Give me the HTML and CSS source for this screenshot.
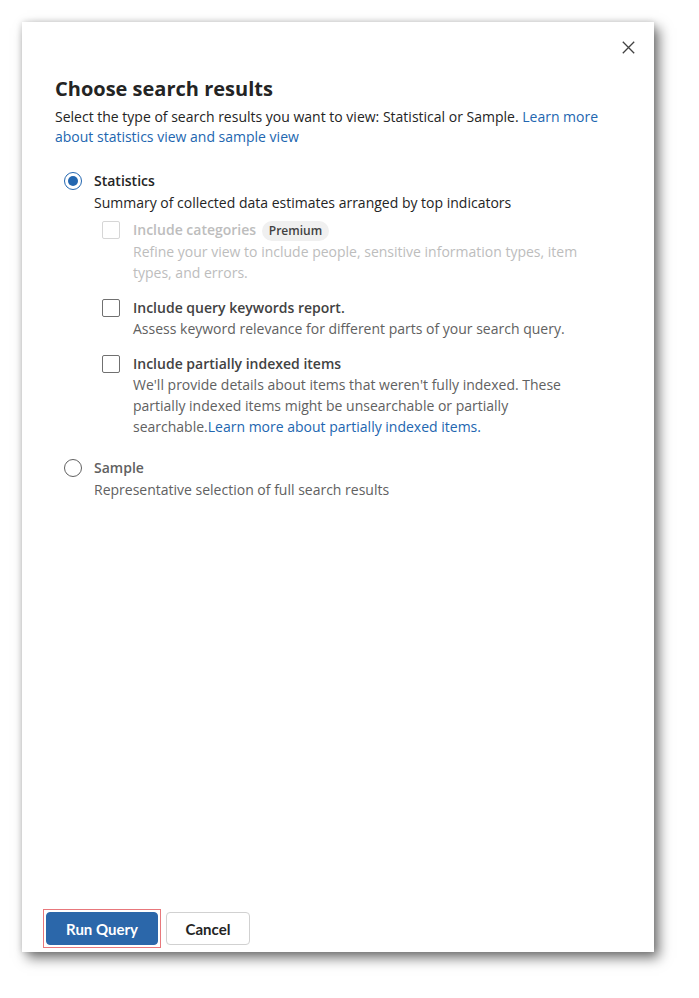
FILE: index.html
```html
<!DOCTYPE html>
<html>
<head>
<meta charset="utf-8">
<link rel="stylesheet" href="styles.css">
</head>
<body>
<div class="panel">
  <button class="close" aria-label="Close">
    <svg width="13" height="13" viewBox="0 0 13 13"><path d="M0.8 0.8L12.2 12.2M12.2 0.8L0.8 12.2" stroke="#424242" stroke-width="1.3" fill="none"/></svg>
  </button>
  <div class="content">
    <h1 class="title">Choose search results</h1>
    <p class="intro">Select the type of search results you want to view: Statistical or Sample. <a class="link" href="#">Learn more about statistics view and sample view</a></p>

    <div class="option">
      <span class="radio checked"></span>
      <div class="opt-body">
        <div class="opt-label strong">Statistics</div>
        <div class="opt-desc strong">Summary of collected data estimates arranged by top indicators</div>

        <div class="check disabled">
          <span class="box"></span>
          <div class="check-body">
            <div class="check-label">Include categories <span class="badge">Premium</span></div>
            <div class="check-desc">Refine your view to include people, sensitive information types, item types, and errors.</div>
          </div>
        </div>

        <div class="check">
          <span class="box"></span>
          <div class="check-body">
            <div class="check-label">Include query keywords report.</div>
            <div class="check-desc">Assess keyword relevance for different parts of your search query.</div>
          </div>
        </div>

        <div class="check">
          <span class="box"></span>
          <div class="check-body">
            <div class="check-label">Include partially indexed items</div>
            <div class="check-desc">We'll provide details about items that weren't fully indexed. These partially indexed items might be unsearchable or partially searchable.<a class="link" href="#">Learn more about partially indexed items.</a></div>
          </div>
        </div>
      </div>
    </div>

    <div class="option sample">
      <span class="radio"></span>
      <div class="opt-body">
        <div class="opt-label">Sample</div>
        <div class="opt-desc">Representative selection of full search results</div>
      </div>
    </div>
  </div>
  <div class="footer">
    <div class="focus-ring"><button class="btn primary">Run Query</button></div>
    <button class="btn secondary">Cancel</button>
  </div>
</div>
</body>
</html>
```
FILE: styles.css
```css
html, body {
  margin: 0;
  padding: 0;
  background: #ffffff;
}
body {
  font-family: "Open Sans", "Noto Sans", sans-serif;
  color: #242424;
  width: 699px;
  height: 998px;
  overflow: hidden;
}
.panel {
  position: relative;
  margin: 22px 0 0 22px;
  width: 632px;
  height: 930px;
  background: #ffffff;
  box-shadow: 5px 6px 12px rgba(0, 0, 0, 0.55), 0 0 6px rgba(0, 0, 0, 0.15);
  display: flex;
  flex-direction: column;
}
.close {
  position: absolute;
  top: 14px;
  right: 15px;
  width: 22px;
  height: 22px;
  padding: 0;
  border: none;
  background: transparent;
  display: flex;
  align-items: center;
  justify-content: center;
}
.content {
  flex: 1;
  padding: 53px 40px 0 33px;
}
.title {
  margin: 0;
  font-size: 20px;
  line-height: 28px;
  font-weight: 700;
  color: #242424;
}
.intro {
  margin: 4px 0 0 0;
  font-size: 14px;
  line-height: 20px;
  color: #242424;
}
.link {
  color: #2266b0;
  text-decoration: none;
}
.option {
  display: flex;
  margin: 24px 0 0 9px;
}
.option.sample {
  margin-top: 21px;
}
.radio {
  flex: none;
  width: 18px;
  height: 18px;
  border: 1px solid #616161;
  border-radius: 50%;
  margin: 1px 12px 0 0;
  box-sizing: border-box;
  position: relative;
}
.radio.checked {
  border-color: #2266b0;
}
.radio.checked::after {
  content: "";
  position: absolute;
  left: 3px;
  top: 3px;
  width: 10px;
  height: 10px;
  border-radius: 50%;
  background: #2266b0;
}
.opt-body {
  flex: 1;
}
.opt-label {
  font-size: 14px;
  line-height: 20px;
  font-weight: 600;
  color: #616161;
}
.opt-desc {
  font-size: 14px;
  line-height: 20px;
  color: #616161;
  margin-top: 2px;
}
.opt-label.strong, .opt-desc.strong {
  color: #242424;
}
.check {
  display: flex;
  margin-top: 7px;
  color: #616161;
}
.check + .check {
  margin-top: 15px;
}
.box {
  flex: none;
  width: 18px;
  height: 18px;
  border: 1px solid #707070;
  border-radius: 2px;
  box-sizing: border-box;
  margin: 1px 13px 0 8px;
}
.check-body {
  flex: 1;
}
.check-label {
  font-size: 14px;
  line-height: 20px;
  font-weight: 600;
  color: #424242;
}
.check-desc {
  font-size: 14px;
  line-height: 21px;
  color: #616161;
  margin-top: 0;
}
.check.disabled .box {
  border-color: #d6d6d6;
}
.check.disabled .check-label,
.check.disabled .check-desc {
  color: #bdbdbd;
}
.badge {
  display: inline-block;
  background: #f0f0f0;
  color: #424242;
  font-size: 12px;
  line-height: 20px;
  font-weight: 600;
  padding: 0 7px;
  border-radius: 10px;
  margin-left: 2px;
}
.footer {
  display: flex;
  align-items: center;
  gap: 5px;
  padding: 0 0 4px 21px;
}
.focus-ring {
  border: 1px solid #e8787c;
  padding: 2px;
  display: flex;
}
.btn {
  font-family: "Lato", "Liberation Sans", sans-serif;
  font-size: 15px;
  font-weight: 700;
  height: 33px;
  border-radius: 4px;
  padding: 0 18px;
  cursor: pointer;
}
.btn.primary {
  background: #2b67aa;
  color: #ffffff;
  border: 1px solid #2b67aa;
  width: 112px;
}
.btn.secondary {
  background: #ffffff;
  color: #242424;
  border: 1px solid #d1d1d1;
  width: 84px;
}
```
